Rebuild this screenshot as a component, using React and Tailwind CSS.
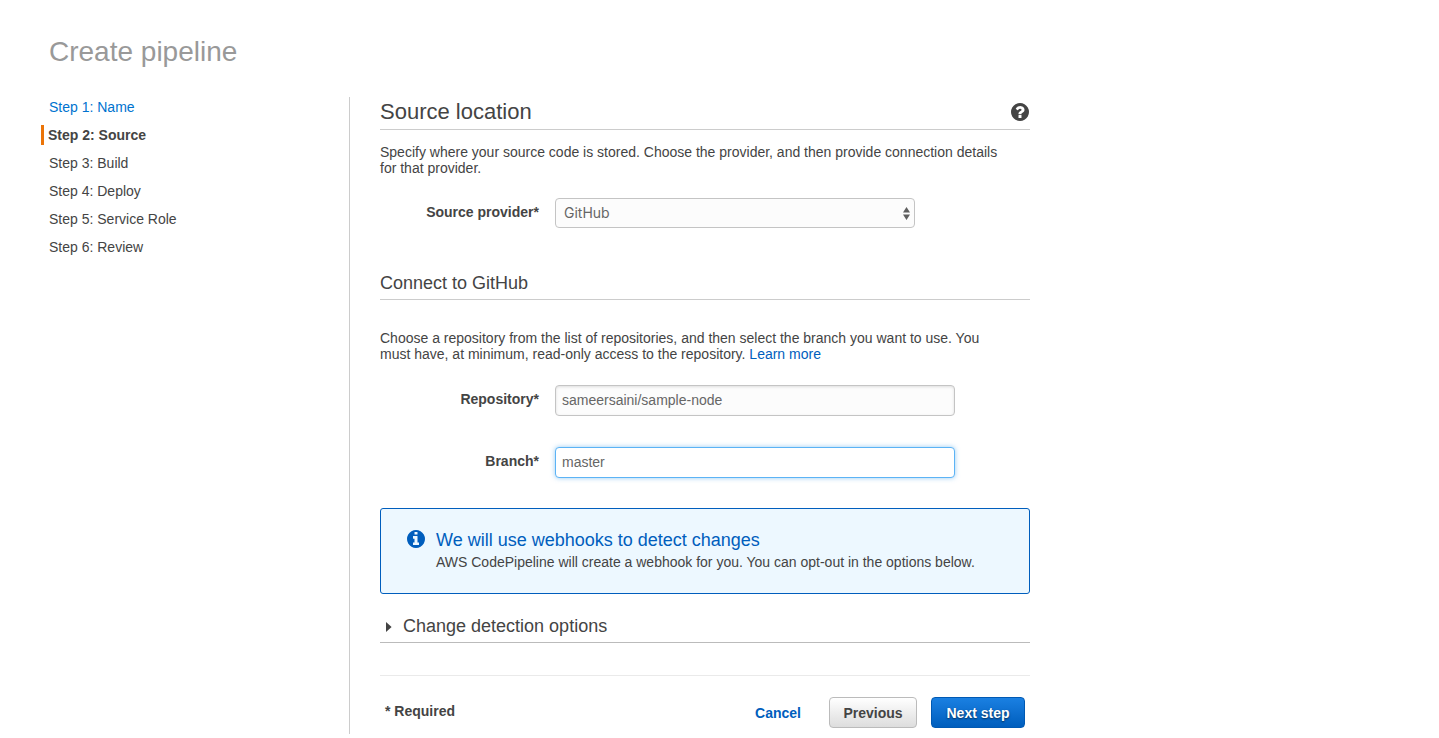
import React from "react";

const steps = ["Name", "Source", "Build", "Deploy", "Service Role", "Review"];
const current = 1;

function HelpIcon() {
  return (
    <svg viewBox="128 128 1536 1536" aria-hidden="true" className="size-[18px] fill-current">
      <path d="M1024 1376v-192q0-14-9-23t-23-9h-192q-14 0-23 9t-9 23v192q0 14 9 23t23 9h192q14 0 23-9t9-23zm256-672q0-88-55.500-163t-138.500-116-170-41q-243 0-371 213-15 24 8 42l132 100q7 6 19 6 16 0 25-12 53-68 86-92 34-24 86-24 48 0 85.500 26t37.500 59q0 38-20 61t-68 45q-63 28-115.500 86.500t-52.500 125.500v36q0 14 9 23t23 9h192q14 0 23-9t9-23q0-19 21.500-49.500t54.500-49.500q32-18 49-28.500t46-35 44.500-48 28-60.500 12.500-81zm384 192q0 209-103 385.500t-279.500 279.500-385.500 103-385.500-103-279.500-279.500-103-385.500 103-385.500 279.500-279.500 385.500-103 385.500 103 279.500 279.500 103 385.500z" />
    </svg>
  );
}

function InfoIcon() {
  return (
    <svg
      viewBox="128 128 1536 1536"
      aria-hidden="true"
      className="mt-[2px] size-[18px] shrink-0 fill-[#005ebd]"
    >
      <path d="M1152 1376v-160q0-14-9-23t-23-9h-96v-512q0-14-9-23t-23-9h-320q-14 0-23 9t-9 23v160q0 14 9 23t23 9h96v320h-96q-14 0-23 9t-9 23v160q0 14 9 23t23 9h448q14 0 23-9t9-23zm-128-896v-160q0-14-9-23t-23-9h-192q-14 0-23 9t-9 23v160q0 14 9 23t23 9h192q14 0 23-9t9-23zm640 416q0 209-103 385.500t-279.500 279.500-385.500 103-385.500-103-279.500-279.500-103-385.500 103-385.500 279.500-279.500 385.500-103 385.500 103 279.500 279.500 103 385.500z" />
    </svg>
  );
}

function Steps() {
  return (
    <nav aria-label="Steps" className="w-[308px] shrink-0">
      <ol className="flex flex-col gap-2">
        {steps.map((name, i) => {
          const text = `Step ${i + 1}: ${name}`;
          if (i === current) {
            return (
              <li
                key={name}
                aria-current="step"
                className="border-l-3 border-[#eb7407] pl-1 font-bold leading-5"
              >
                {text}
              </li>
            );
          }
          return (
            <li key={name} className="pl-2 leading-5">
              {i < current ? (
                <a href="#name" className="text-[#0073cf]">
                  {text}
                </a>
              ) : (
                text
              )}
            </li>
          );
        })}
      </ol>
    </nav>
  );
}

function Field({ id, label, children }) {
  return (
    <div className="flex items-start gap-4">
      <label htmlFor={id} className="w-[159px] shrink-0 text-right font-bold leading-7">
        {label}*
      </label>
      {children}
    </div>
  );
}

export default function App() {
  return (
    <div className="min-h-screen bg-white px-[41px] pt-8 pb-[5px] font-['Helvetica_Neue','Liberation_Sans',Arial,sans-serif] text-sm text-[#444]">
      <h1 className="pl-2 text-[28px] leading-10 text-[#999]">Create pipeline</h1>
      <div className="mt-[25px] flex">
        <Steps />
        <main className="min-w-0 flex-1 border-l border-[#ccc] pl-[30px] pb-[5px]">
          <form className="max-w-[650px]" onSubmit={(e) => e.preventDefault()}>
            <div className="flex items-center justify-between border-b border-[#ccc] pb-[2px]">
              <h2 className="text-[22px] leading-[30px]">Source location</h2>
              <button type="button" aria-label="Help" className="mr-[1px]">
                <HelpIcon />
              </button>
            </div>
            <p className="mt-[14px] max-w-[630px] leading-4">
              Specify where your source code is stored. Choose the provider, and then provide
              connection details for that provider.
            </p>
            <div className="mt-[22px]">
              <Field id="provider" label="Source provider">
                <div className="grid w-[360px] items-center">
                  <select
                    id="provider"
                    defaultValue="GitHub"
                    className="col-start-1 row-start-1 h-[30px] w-full appearance-none rounded-[4px] border border-[#c4c4c4] bg-[#fcfcfc] px-2 font-[Inter,sans-serif] text-sm text-[#666]"
                  >
                    <option>GitHub</option>
                    <option>Amazon S3</option>
                    <option>AWS CodeCommit</option>
                  </select>
                  <svg
                    viewBox="0 0 7 13"
                    aria-hidden="true"
                    className="pointer-events-none col-start-1 row-start-1 mr-[5px] h-[13px] w-[7px] justify-self-end fill-[#5f5f5f]"
                  >
                    <path d="M3.5 0 7 5.500H0zM0 7.500h7L3.500 13z" />
                  </svg>
                </div>
              </Field>
            </div>

            <h3 className="mt-[43px] border-b border-[#ccc] pb-1 text-lg leading-6">
              Connect to GitHub
            </h3>
            <p className="mt-[30px] max-w-[630px] leading-4">
              Choose a repository from the list of repositories, and then select the branch you
              want to use. You must have, at minimum, read-only access to the repository.{" "}
              <a href="#learn-more" className="text-[#005ebd]">
                Learn more
              </a>
            </p>
            <div className="mt-[23px] flex flex-col gap-[31px]">
              <Field id="repository" label="Repository">
                <input
                  id="repository"
                  type="text"
                  defaultValue="sameersaini/sample-node"
                  className="h-[31px] w-[400px] rounded-[4px] border border-[#c4c4c4] bg-[#fcfcfc] px-1.5 pb-[2px] text-[#666] shadow-[inset_0_1px_3px_rgba(0,0,0,0.12)] outline-none"
                />
              </Field>
              <Field id="branch" label="Branch">
                <input
                  id="branch"
                  type="text"
                  defaultValue="master"
                  className="h-[31px] w-[400px] rounded-[4px] border border-[#5cb3f5] bg-white px-1.5 pb-[2px] text-[#666] shadow-[0_0_5px_rgba(82,168,236,0.6)] outline-none"
                />
              </Field>
            </div>

            <section className="mt-[30px] flex gap-[11px] rounded-[3px] border border-[#005ebd] bg-[#edf8ff] px-[26px] pt-[19px] pb-[21px]">
              <InfoIcon />
              <div>
                <h3 className="text-lg leading-6 text-[#005ebd]">
                  We will use webhooks to detect changes
                </h3>
                <p className="leading-5">
                  AWS CodePipeline will create a webhook for you. You can opt-out in the options
                  below.
                </p>
              </div>
            </section>

            <h3 className="mt-5 border-b border-[#bbb] pb-1 text-lg leading-6">
              <button
                type="button"
                aria-expanded="false"
                className="flex items-center gap-[11px] pl-1.5"
              >
                <svg
                  viewBox="0 0 6 10"
                  aria-hidden="true"
                  className="mt-[2px] h-[10px] w-[6px] fill-current"
                >
                  <path d="M0 0 5.600 5 0 10z" />
                </svg>
                Change detection options
              </button>
            </h3>

            <footer className="mt-8 flex items-start border-t border-[#eaeaea] px-[5px] pt-[21px] font-bold">
              <span className="mr-auto leading-7">* Required</span>
              <a href="#cancel" className="mr-7 leading-8 text-[#005ebd]">
                Cancel
              </a>
              <button
                type="button"
                className="mr-[14px] h-[31px] w-[88px] rounded-[4px] border border-[#bbb] bg-linear-to-b from-white to-[#ddd] font-bold text-[#444]"
              >
                Previous
              </button>
              <button
                type="submit"
                className="h-[31px] w-[94px] rounded-[4px] border border-[#0059b3] bg-linear-to-b from-[#1a80e2] to-[#005ebd] font-bold text-white [text-shadow:0_1px_2px_rgba(0,0,0,0.6)]"
              >
                Next step
              </button>
            </footer>
          </form>
        </main>
      </div>
    </div>
  );
}
